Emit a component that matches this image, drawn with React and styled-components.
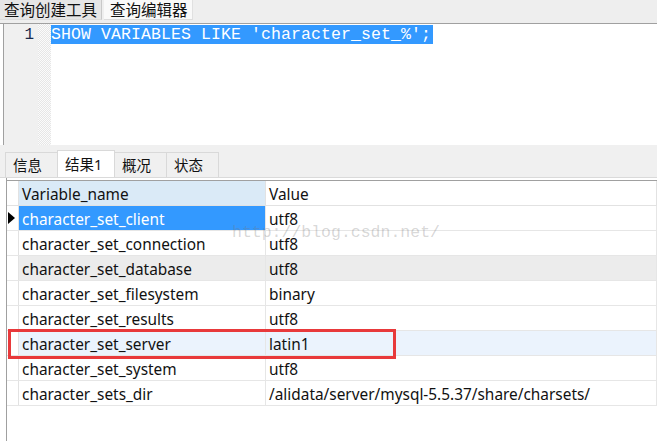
import React from 'react';
import styled, { createGlobalStyle } from 'styled-components';

const Global = createGlobalStyle`
  html, body { margin: 0; padding: 0; }
  body {
    width: 657px;
    height: 441px;
    overflow: hidden;
    background: #ffffff;
    font-family: "Noto Sans", "Noto Sans CJK SC", sans-serif;
    color: #111;
  }
`;

const rows = [
  { name: 'character_set_client', value: 'utf8', kind: 'selected' },
  { name: 'character_set_connection', value: 'utf8' },
  { name: 'character_set_database', value: 'utf8', kind: 'gray' },
  { name: 'character_set_filesystem', value: 'binary' },
  { name: 'character_set_results', value: 'utf8' },
  { name: 'character_set_server', value: 'latin1', kind: 'hover', marked: true },
  { name: 'character_set_system', value: 'utf8' },
  { name: 'character_sets_dir', value: '/alidata/server/mysql-5.5.37/share/charsets/' },
];

function App() {
  return (
    <Page>
      <Global />
      <TopBar>
        <TopTab>查询创建工具</TopTab>
        <TopTab active>查询编辑器</TopTab>
      </TopBar>
      <Editor>
        <Gutter>1</Gutter>
        <FoldStrip />
        <Code>
          <Selected>SHOW VARIABLES LIKE 'character_set_%';</Selected>
        </Code>
      </Editor>
      <ResultTabs>
        <ResultTab>信息</ResultTab>
        <ResultTab active>结果1</ResultTab>
        <ResultTab>概况</ResultTab>
        <ResultTab>状态</ResultTab>
      </ResultTabs>
      <Panel>
        <Grid>
          <HeaderRow>
            <Indicator />
            <HeadCell name>Variable_name</HeadCell>
            <HeadCell>Value</HeadCell>
          </HeaderRow>
          {rows.map((r) => (
            <Row key={r.name}>
              <Indicator>{r.kind === 'selected' && <Arrow />}</Indicator>
              <Cell name kind={r.kind}>{r.name}</Cell>
              <Cell kind={r.kind === 'selected' ? undefined : r.kind}>{r.value}</Cell>
              {r.marked && <Mark />}
            </Row>
          ))}
          <Watermark>http://blog.csdn.net/</Watermark>
        </Grid>
      </Panel>
    </Page>
  );
}

export default App;

const Page = styled.div`
  width: 657px;
  height: 441px;
  display: flex;
  flex-direction: column;
  overflow: hidden;
`;

const TopBar = styled.div`
  height: 23px;
  background: #eeeeee;
  border-bottom: 1px solid #a0a0a0;
  display: flex;
  align-items: flex-start;
  gap: 2px;
  box-sizing: content-box;
`;

const TopTab = styled.div`
  height: 20px;
  line-height: 20px;
  padding-left: ${(p) => (p.active ? '6px' : '4px')};
  padding-right: 4px;
  font-size: 15.5px;
  background: ${(p) => (p.active ? '#f9f9f9' : '#e6e6e6')};
  border-right: 1px solid ${(p) => (p.active ? '#e0e0e0' : '#c8c8c8')};
  border-bottom: 1px solid #dcdcdc;
  box-sizing: border-box;
`;

const Editor = styled.div`
  height: 121px;
  display: flex;
  margin-left: 3px;
  border-left: 1px solid #a0a0a0;
  background: #ffffff;
`;

const Gutter = styled.div`
  width: 34px;
  background: #f0f0f0;
  text-align: right;
  padding-right: 4px;
  box-sizing: border-box;
  font-family: "Liberation Mono", monospace;
  font-size: 16px;
  line-height: 19px;
  padding-top: 2px;
  color: #1a2a4a;
`;

const FoldStrip = styled.div`
  width: 13px;
  background: repeating-conic-gradient(#e6e6e6 0 25%, #fbfbfb 0 50%) 0 0 / 2px 2px;
`;

const Code = styled.div`
  flex: 1;
  padding-top: 1px;
`;

const Selected = styled.div`
  width: fit-content;
  height: 19px;
  line-height: 20px;
  padding-right: 2px;
  background: #3399ff;
  color: #ffffff;
  font-family: "Liberation Mono", monospace;
  font-size: 16.5px;
  letter-spacing: 0.1px;
  white-space: pre;
`;

const ResultTabs = styled.div`
  height: 33px;
  background: #f0f0f0;
  display: flex;
  align-items: flex-end;
  padding-left: 5px;
  border-bottom: 1px solid #dadada;
  box-sizing: border-box;
`;

const ResultTab = styled.div`
  height: ${(p) => (p.active ? '27px' : '25px')};
  line-height: ${(p) => (p.active ? '26px' : '24px')};
  padding: 0 7px;
  margin-right: -1px;
  font-size: 14.5px;
  background: ${(p) => (p.active ? '#ffffff' : '#f0f0f0')};
  border: 1px solid #d9d9d9;
  border-bottom: none;
  box-sizing: border-box;
  width: ${(p) => (p.active ? '58px' : '53px')};
`;

const Panel = styled.div`
  flex: 1;
  margin-left: 6px;
  border-left: 1px solid #a0a0a0;
  background: #ffffff;
  padding-top: 2px;
`;

const Grid = styled.div`
  position: relative;
  border-top: 1px solid #a0a0a0;
`;

const HeaderRow = styled.div`
  display: grid;
  grid-template-columns: 12px 247px 1fr;
  height: 25px;
  border-bottom: 1px solid #e2e2e2;
  box-sizing: border-box;
`;

const Row = styled.div`
  position: relative;
  display: grid;
  grid-template-columns: 12px 247px 1fr;
  height: 25px;
  border-bottom: 1px solid #e6e6e6;
  box-sizing: border-box;
`;

const Indicator = styled.div`
  border-right: 1px solid #e2e2e2;
  display: flex;
  align-items: center;
  justify-content: center;
`;

const Arrow = styled.span`
  width: 0;
  height: 0;
  border-top: 6px solid transparent;
  border-bottom: 6px solid transparent;
  border-left: 7px solid #000;
  margin-left: -3px;
`;

const cellBg = {
  selected: '#3399ff',
  gray: '#ececec',
  hover: '#ebf3fd',
};

const HeadCell = styled.div`
  background: ${(p) => (p.name ? '#daeaf7' : '#ffffff')};
  border-right: 1px solid #e2e2e2;
  padding: 3px 0 0 3px;
  font-size: 15.4px;
  line-height: 21px;
  white-space: nowrap;
  overflow: hidden;
`;

const Cell = styled.div`
  background: ${(p) => cellBg[p.kind] || '#ffffff'};
  color: ${(p) => (p.kind === 'selected' ? '#ffffff' : '#111')};
  border-right: 1px solid #e6e6e6;
  padding: 3px 0 0 3px;
  font-size: 15.4px;
  line-height: 21px;
  white-space: nowrap;
  overflow: hidden;
`;

const Mark = styled.div`
  position: absolute;
  z-index: 2;
  left: 1px;
  top: -2px;
  width: 388px;
  height: 30px;
  border: 3px solid #e8393b;
  box-sizing: border-box;
  pointer-events: none;
`;

const Watermark = styled.div`
  position: absolute;
  z-index: 3;
  left: 225px;
  top: 42px;
  font-family: "Liberation Mono", monospace;
  font-size: 16.5px;
  color: rgba(120, 120, 120, 0.3);
  pointer-events: none;
  white-space: pre;
`;
